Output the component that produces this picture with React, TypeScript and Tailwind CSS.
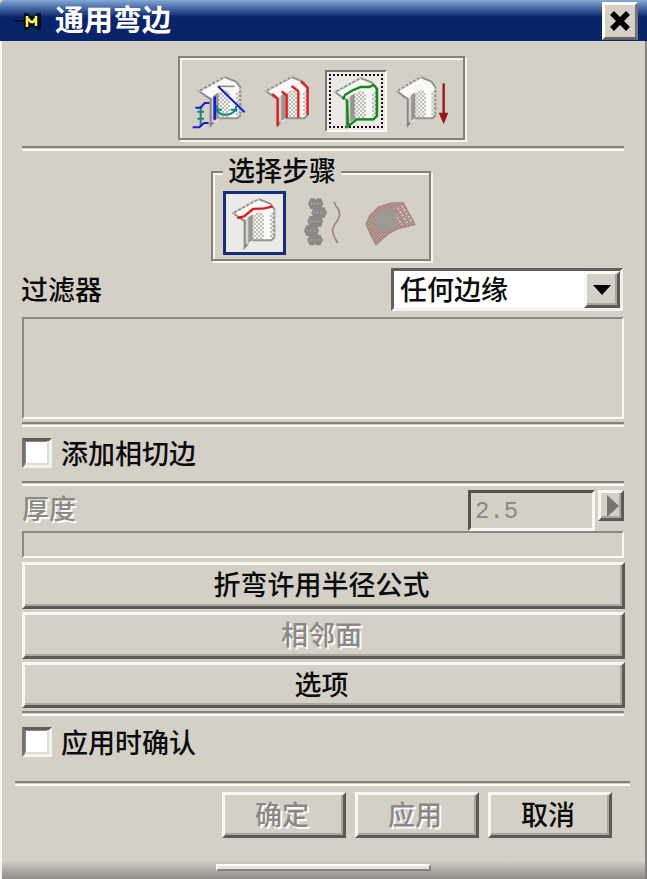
import React from "react";
import clsx from "clsx";

type ButtonProps = {
  label: string;
  disabled?: boolean;
  className?: string;
};

const raised =
  "border-[3px] border-t-[#f8f7f3] border-l-[#f8f7f3] border-b-[#5c5a58] border-r-[#5c5a58] shadow-[inset_-2px_-2px_0_#aaa7a0]";
const disabledText = "text-[#8b8986] [text-shadow:2px_2px_0_#fbfaf7]";

function PushButton({ label, disabled = false, className }: ButtonProps) {
  return (
    <button
      type="button"
      disabled={disabled}
      className={clsx(
        "flex items-center justify-center bg-[#d4d0c8] pr-[4px] pb-[3px]",
        raised,
        disabled && disabledText,
        className
      )}
    >
      {label}
    </button>
  );
}

function Separator({ className }: { className?: string }) {
  return (
    <div
      className={clsx(
        "h-[5px] shrink-0 border-t-[2px] border-b-[2px] border-t-[#85827e] border-b-[#fbfaf6]",
        className
      )}
    />
  );
}

function CheckRow({ label, className }: { label: string; className?: string }) {
  return (
    <label className={clsx("flex h-[30px] items-center", className)}>
      <span className="h-[30px] w-[30px] border-[3px] border-t-[#5f5d5a] border-l-[#77746f] border-r-[#f4f2ed] border-b-[#f4f2ed] bg-white shadow-[inset_-2px_-2px_0_#dedbd4,inset_1px_1px_0_#8a8782]" />
      <span className="ml-[9px] leading-[30px]">{label}</span>
    </label>
  );
}

// Shared sheet metal body, 3 units per pixel
function BendBody() {
  return (
    <>
      <defs>
        <pattern id="mesh" width="12" height="12" patternUnits="userSpaceOnUse">
          <rect width="12" height="12" fill="#f1f0ed" />
          <rect width="6" height="6" fill="#bfbdb9" />
          <rect x="6" y="6" width="6" height="6" fill="#bfbdb9" />
        </pattern>
      </defs>
      <path d="M3 48 80 6 114 20 127 36V122L118 130H64L40 152V74L22 62Z" fill="#f9f9f7" />
      <path d="M40 68 52 58V140L40 152Z" fill="#d4d2cd" />
      <path d="M60 56 74 46H88L96 58V128H60Z" fill="url(#mesh)" />
      <path d="M49 60 62 52V130L49 138Z" fill="#979592" />
      <path d="M114 48h12v78h-12Z" fill="url(#mesh)" />
      <path
        d="M22 62 3 48 80 6 114 20 127 36V122L118 130H62"
        fill="none"
        stroke="#94928f"
        strokeWidth="6"
      />
      <path d="M80 6 3 48" fill="none" stroke="#dddbd6" strokeWidth="6" strokeDasharray="5 9" />
      <path d="M22 62 38 72V151L46 142" fill="none" stroke="#868482" strokeWidth="6" />
      <path d="M127 40v80" stroke="#d4d2cd" strokeWidth="6" strokeDasharray="5 8" />
    </>
  );
}

function DimensionIcon() {
  return (
    <svg viewBox="-18 0 162 162" className="h-[54px] w-[54px]">
      <BendBody />
      <path d="M60 34H110" stroke="#94928f" strokeWidth="5" />
      <path d="M56 103c8 22 46 22 58-2M56 90v22M54 104h18M114 92v18M116 104H98" fill="none" stroke="#14877b" strokeWidth="6" />
      <path d="M8 92v62M-2 110h20M-2 131h20" fill="none" stroke="#14877b" strokeWidth="6" />
      <path d="M-8 98H8L20 84H34M-16 157H4L18 144H32" fill="none" stroke="#1b1bd0" strokeWidth="6" />
      <path d="M50 64v70" stroke="#1b1bd0" strokeWidth="8" />
      <path d="M60 34 140 112" stroke="#1b1bd0" strokeWidth="6" />
    </svg>
  );
}

function RedBendIcon() {
  return (
    <svg viewBox="0 0 135 162" className="h-[54px] w-[45px]">
      <BendBody />
      <path
        d="M22 57 38 71V152M50 49 65 61V129M80 33 100 49V129M108 20 128 38V120"
        fill="none"
        stroke="#e11c1c"
        strokeWidth="7"
      />
    </svg>
  );
}

function GreenBendIcon() {
  return (
    <svg viewBox="0 0 135 162" className="h-[54px] w-[45px]">
      <BendBody />
      <path
        d="M26 70 34 56 56 43 80 33H106L118 27 129 38V120L118 130H68L42 151 39 72"
        fill="none"
        stroke="#108a1c"
        strokeWidth="7"
      />
    </svg>
  );
}

function DirectionIcon() {
  return (
    <svg viewBox="0 0 162 162" className="h-[54px] w-[54px]">
      <g transform="scale(.93 1)">
        <BendBody />
      </g>
      <path d="M143 25v95" stroke="#961616" strokeWidth="7" />
      <path d="M128 113h29l-14 35Z" fill="#961616" />
    </svg>
  );
}

function EdgeIcon() {
  return (
    <svg viewBox="0 0 135 162" className="h-[54px] w-[45px]">
      <BendBody />
      <path d="M16 63 36 58 63 36 98 34 122 28" fill="none" stroke="#e81717" strokeWidth="7" />
    </svg>
  );
}

function ChainIcon() {
  return (
    <svg viewBox="0 0 114 150" className="h-[50px] w-[38px]">
      <g fill="#8b8986">
        <path d="M22 4H34L38 9 42 4H54L61 20 54 36H22L15 20Z" />
        <path d="M32 31H44L48 36 52 31H64L72 47 64 63H32L25 47Z" />
        <path d="M20 57H32L36 62 40 57H54L60 73 54 90H20L13 73Z" />
        <path d="M10 85H20L24 90 28 85H42L48 101 42 117H10L3 101Z" />
        <path d="M20 113H32L36 118 40 113H52L60 129 52 145H40L36 140 32 145H20L13 129Z" />
      </g>
      <path
        d="M22 20H54M32 47H64M20 73H52M10 101H42M20 129H52"
        stroke="#aaa8a3"
        strokeWidth="5"
        strokeDasharray="5 5"
      />
      <path
        d="M93 14 98 26 107 38 110 54 104 70 94 84 88 100 93 118 104 138"
        fill="none"
        stroke="#9c8580"
        strokeWidth="5"
      />
    </svg>
  );
}

function PatchIcon() {
  return (
    <svg viewBox="0 0 156 138" className="h-[46px] w-[52px]">
      <defs>
        <pattern id="hatch" width="10" height="10" patternUnits="userSpaceOnUse">
          <rect width="10" height="10" fill="#b8a19b" />
          <rect width="5" height="5" fill="#a37f79" />
          <rect x="5" y="5" width="5" height="5" fill="#a37f79" />
        </pattern>
      </defs>
      <path d="M3 68 15 43 40 18 80 6H115L150 71 100 83 70 98 33 131 20 108Z" fill="url(#hatch)" />
      <path d="M28 50 48 28 84 20 98 50 97 76 58 98 38 78Z" fill="#9c9a93" />
      <path d="M98 20 128 68M110 14 142 66M96 48 112 72" stroke="#ddcfc8" strokeWidth="4" strokeDasharray="7 5" />
      <path
        d="M3 68 15 43 40 18 80 6H115L150 71 100 83 70 98 33 131 20 108Z"
        fill="none"
        stroke="#a98781"
        strokeWidth="4"
      />
    </svg>
  );
}

function TitleBar() {
  return (
    <header className="flex h-[41px] shrink-0 items-center rounded-tl-[5px] bg-linear-to-b from-[#86a9d7] from-0% via-[#0a246a] via-[42%] to-[#0a246a] pl-[15px] pr-[9px]">
      <svg viewBox="0 0 27 20" className="h-[20px] w-[27px]">
        <path d="M0 10h10" stroke="#050a18" strokeWidth="2" />
        <path d="M9 2h4l2 3h5l2-3h4v17h-4l-2-3h-5l-2 3H9Z" fill="#07101c" />
        <path d="M12 5v11M12 7l4 4h2l3-4M21 5v10" fill="none" stroke="#f7f163" strokeWidth="2.5" />
      </svg>
      <h1 className="ml-[13px] -mt-[5px] pb-[1px] text-[29px] leading-[44px] font-bold text-white">通用弯边</h1>
      <button
        type="button"
        aria-label="关闭"
        className="ml-auto flex h-[38px] w-[36px] items-center justify-center border-[3px] border-t-white border-l-white border-r-[#77746f] border-b-[#66635f] bg-[#d4d0c8]"
      >
        <svg viewBox="0 0 20 20" className="h-[20px] w-[20px]">
          <path d="M2 2 18 18M18 2 2 18" stroke="#000" strokeWidth="5.5" />
        </svg>
      </button>
    </header>
  );
}

const etched =
  "border-[2px] border-[#85827e] shadow-[inset_2px_2px_0_#f7f5f0,2px_2px_0_#f7f5f0]";
const sunken =
  "border-[2px] border-t-[#8b8883] border-l-[#8b8883] border-r-[#fbfaf6] border-b-[#fbfaf6]";

export default function App() {
  return (
    <main className="flex h-[879px] w-[647px] flex-col overflow-hidden bg-[#d4d0c8] font-['Noto_Sans_CJK_SC','Noto_Sans',sans-serif] text-[27px] leading-[32px] font-medium text-[#0b0b0b]">
      <TitleBar />
      <div className="flex flex-1 flex-col border-l-[2px] border-r-[2px] border-l-[#f8f7f3] border-r-[#85827e]">
        <div className="flex flex-1 flex-col pl-[20px] pr-[21px]">
          {/* Flange type */}
          <div className={clsx("ml-[156px] mt-[15px] flex h-[84px] w-[287px] shrink-0 pt-[12px] pl-[12px]", etched)}>
            <div className="pt-[5px]">
              <DimensionIcon />
            </div>
            <div className="ml-[19px] pt-[5px]">
              <RedBendIcon />
            </div>
            <div className="ml-[15px] h-[62px] w-[62px] border-[2px] border-t-[#77746f] border-l-[#77746f] border-r-[#fbfaf6] border-b-[#fbfaf6] bg-[#ebe9e5] p-[2px]">
              <div className="flex h-full w-full items-start justify-center border-[2px] border-dotted border-[#111]">
                <GreenBendIcon />
              </div>
            </div>
            <div className="ml-[9px] pt-[5px]">
              <DirectionIcon />
            </div>
          </div>
          <Separator className="mt-[6px]" />

          {/* Selection steps */}
          <fieldset className="mt-[4px] ml-[189px] flex h-[107px] w-[220px] shrink-0 flex-col">
            <div className={clsx("relative mt-[16px] flex h-[90px] pt-[18px] pl-[10px]", etched)}>
              <span className="absolute -top-[19px] left-[10px] h-[32px] bg-[#d4d0c8] px-[5px] leading-[31px]">
                选择步骤
              </span>
              <div className="flex h-[64px] w-[63px] shrink-0 justify-center border-[3px] border-[#142f7c] bg-[#eceae7] pt-[3px]">
                <EdgeIcon />
              </div>
              <div className="ml-[17px] pt-[6px]">
                <ChainIcon />
              </div>
              <div className="ml-[24px] pt-[10px]">
                <PatchIcon />
              </div>
            </div>
          </fieldset>

          <div className="mt-[6px] flex h-[43px] shrink-0 items-center justify-between">
            <span className="-mt-[2px] -ml-[1px]">过滤器</span>
            <div className="mr-[1px] flex h-[43px] w-[232px] border-[3px] border-t-[#62605c] border-l-[#62605c] border-r-[#f4f2ed] border-b-[#f4f2ed] bg-white pl-[6px]">
              <span className="leading-[36px]">任何边缘</span>
              <div className={clsx("ml-auto flex h-[37px] w-[36px] items-center justify-center bg-[#d4d0c8]", raised)}>
                <svg viewBox="0 0 18 10" className="h-[10px] w-[18px]">
                  <path d="M0 0h18L9 10Z" fill="#000" />
                </svg>
              </div>
            </div>
          </div>

          <div className={clsx("mt-[6px] h-[102px] shrink-0", sunken)} />
          <Separator className="mt-[3px]" />
          <CheckRow label="添加相切边" className="mt-[11px]" />
          <Separator className="mt-[13px]" />

          <div className="mt-[4px] flex h-[41px] shrink-0 items-start">
            <span className={clsx("mt-[2px]", disabledText)}>厚度</span>
            <div className="ml-auto h-[41px] w-[127px] border-[3px] border-t-[#55534f] border-l-[#55534f] border-r-[#f8f7f3] border-b-[#f8f7f3] pl-[4px] font-['Liberation_Mono',monospace] text-[24px] leading-[38px] font-normal text-[#8b8986]">
              2.5
            </div>
            <button type="button" aria-label="更多" className={clsx("ml-[3px] flex h-[31px] w-[26px] items-center justify-center pl-[3px]", raised)}>
              <svg viewBox="0 0 12 22" className="h-[22px] w-[12px]">
                <path d="M0 0 12 11 0 22Z" fill="#77746f" />
              </svg>
            </button>
          </div>
          <div className={clsx("h-[27px] shrink-0", sunken)} />

          <div className="-mr-[1px] mt-[4px] flex flex-col gap-[3px]">
            <PushButton label="折弯许用半径公式" className="h-[47px] w-full" />
            <PushButton label="相邻面" disabled className="h-[47px] w-full" />
            <PushButton label="选项" className="h-[46px] w-full" />
          </div>
          <Separator className="mt-[3px]" />
          <CheckRow label="应用时确认" className="mt-[11px]" />

          <Separator className="-mr-[6px] -ml-[7px] mt-[24px]" />
          <div className="mt-[6px] mr-[12px] flex justify-end gap-[9px]">
            <PushButton label="确定" disabled className="h-[46px] w-[124px]" />
            <PushButton label="应用" disabled className="h-[46px] w-[124px]" />
            <PushButton label="取消" className="h-[46px] w-[124px]" />
          </div>
        </div>
        <footer className="h-[18px] bg-linear-to-b from-[#d0ccc5] to-[#8f8d8a] pt-[3px]">
          <div className="ml-[214px] h-[7px] w-[215px] border-[2px] border-t-[#fbfaf6] border-l-[#fbfaf6] border-r-[#85827e] border-b-[#85827e] bg-[#e6e3dd]" />
        </footer>
      </div>
    </main>
  );
}
